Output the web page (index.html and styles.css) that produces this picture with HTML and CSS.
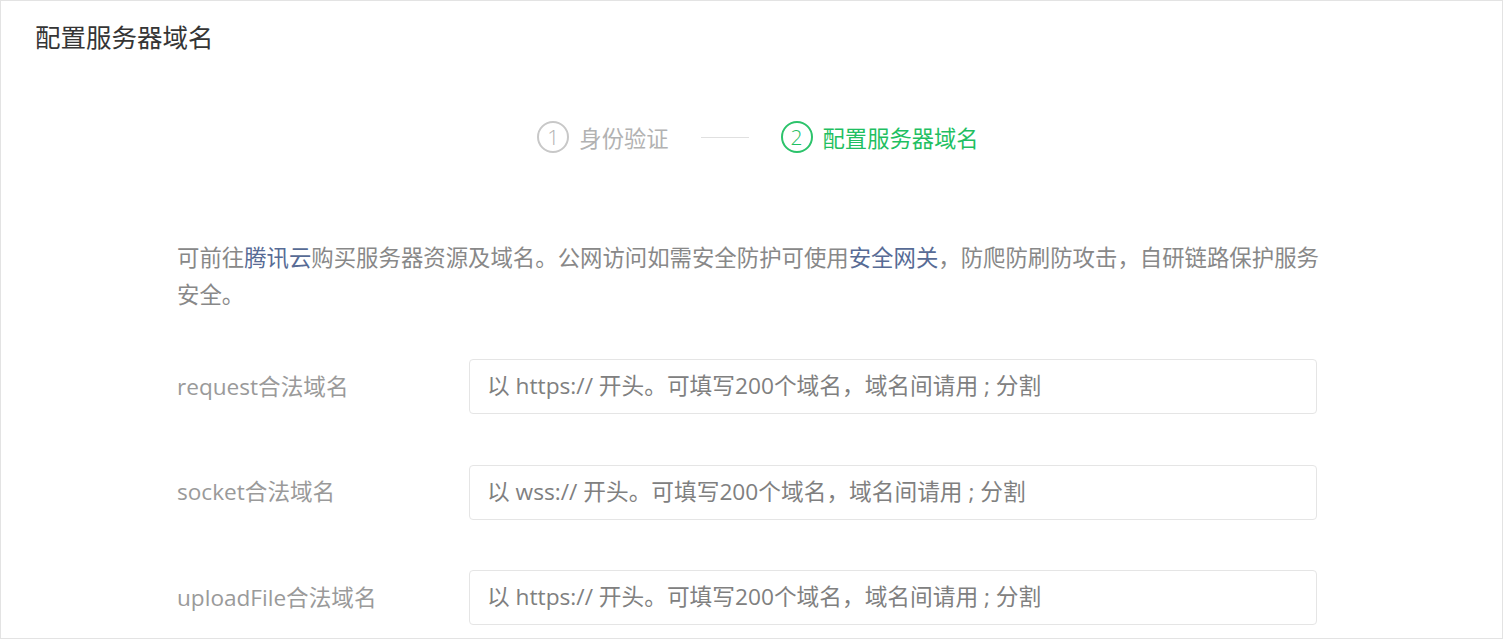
FILE: index.html
```html
<!DOCTYPE html>
<html lang="zh-CN">
<head>
  <meta charset="UTF-8">
  <title>配置服务器域名</title>
  <link rel="stylesheet" href="styles.css">
</head>
<body>
  <div class="panel">
    <h2 class="panel-title">配置服务器域名</h2>

    <div class="steps">
      <div class="step">
        <span class="step-num">1</span>
        <span class="step-text">身份验证</span>
      </div>
      <span class="step-line"></span>
      <div class="step active">
        <span class="step-num">2</span>
        <span class="step-text">配置服务器域名</span>
      </div>
    </div>

    <p class="tips">可前往<a href="#">腾讯云</a>购买服务器资源及域名。公网访问如需安全防护可使用<a href="#">安全网关</a>，防爬防刷防攻击，自研链路保护服务安全。</p>

    <form class="domain-form">
      <div class="form-row">
        <label for="request">request合法域名</label>
        <input type="text" id="request" placeholder="以 https:// 开头。可填写200个域名，域名间请用 ; 分割">
      </div>
      <div class="form-row">
        <label for="socket">socket合法域名</label>
        <input type="text" id="socket" placeholder="以 wss:// 开头。可填写200个域名，域名间请用 ; 分割">
      </div>
      <div class="form-row">
        <label for="upload">uploadFile合法域名</label>
        <input type="text" id="upload" placeholder="以 https:// 开头。可填写200个域名，域名间请用 ; 分割">
      </div>
    </form>
  </div>
</body>
</html>
```

FILE: styles.css
```css
html, body {
  margin: 0;
  padding: 0;
  background: #fff;
  font-family: "Noto Sans CJK SC", "Noto Sans", sans-serif;
}

.panel {
  box-sizing: border-box;
  width: 1503px;
  height: 639px;
  border: 1px solid #e3e3e3;
  overflow: hidden;
}

.panel-title {
  margin: 0;
  padding: 19px 0 0 34px;
  font-size: 25.5px;
  line-height: 32px;
  font-weight: normal;
  color: #353535;
}

/* Steps */
.steps {
  display: flex;
  align-items: center;
  justify-content: center;
  margin-top: 69px;
  padding-left: 13px;
  height: 32px;
}

.step {
  display: flex;
  align-items: center;
  color: #b2b2b2;
}

.step-num {
  box-sizing: border-box;
  width: 32px;
  height: 32px;
  border: 2px solid #c8c8c8;
  border-radius: 50%;
  display: flex;
  align-items: center;
  justify-content: center;
  font-family: "Open Sans", sans-serif;
  font-size: 21px;
  font-weight: 300;
  color: #b2b2b2;
}

.step-text {
  margin-left: 10px;
  font-size: 22.3px;
  line-height: 32px;
}

.step-line {
  width: 48px;
  height: 1px;
  background: #e0e0e0;
  margin: 0 32px;
}

.step.active,
.step.active .step-num {
  color: #1fbf62;
  border-color: #2cc36b;
}

/* Tips */
.tips {
  margin: 85px 0 0 176px;
  width: 1160px;
  font-size: 22.4px;
  line-height: 37px;
  color: #888;
}

.tips a {
  color: #576b95;
  text-decoration: none;
}

/* Form */
.domain-form {
  margin: 47px 0 0 176px;
}

.form-row {
  display: flex;
  align-items: center;
  margin-bottom: 50.5px;
}

.form-row label {
  width: 292px;
  font-family: "Open Sans", "Noto Sans CJK SC", sans-serif;
  font-size: 22.6px;
  color: #9a9a9a;
  margin-top: -3px;
}

.form-row input {
  box-sizing: border-box;
  width: 848px;
  height: 55px;
  padding: 0 17px 2px;
  border: 1px solid #e5e5e5;
  border-radius: 4px;
  font-family: "Open Sans", "Noto Sans CJK SC", sans-serif;
  font-size: 22.7px;
  color: #353535;
  outline: none;
}

.form-row input::placeholder {
  color: #808080;
}
```
